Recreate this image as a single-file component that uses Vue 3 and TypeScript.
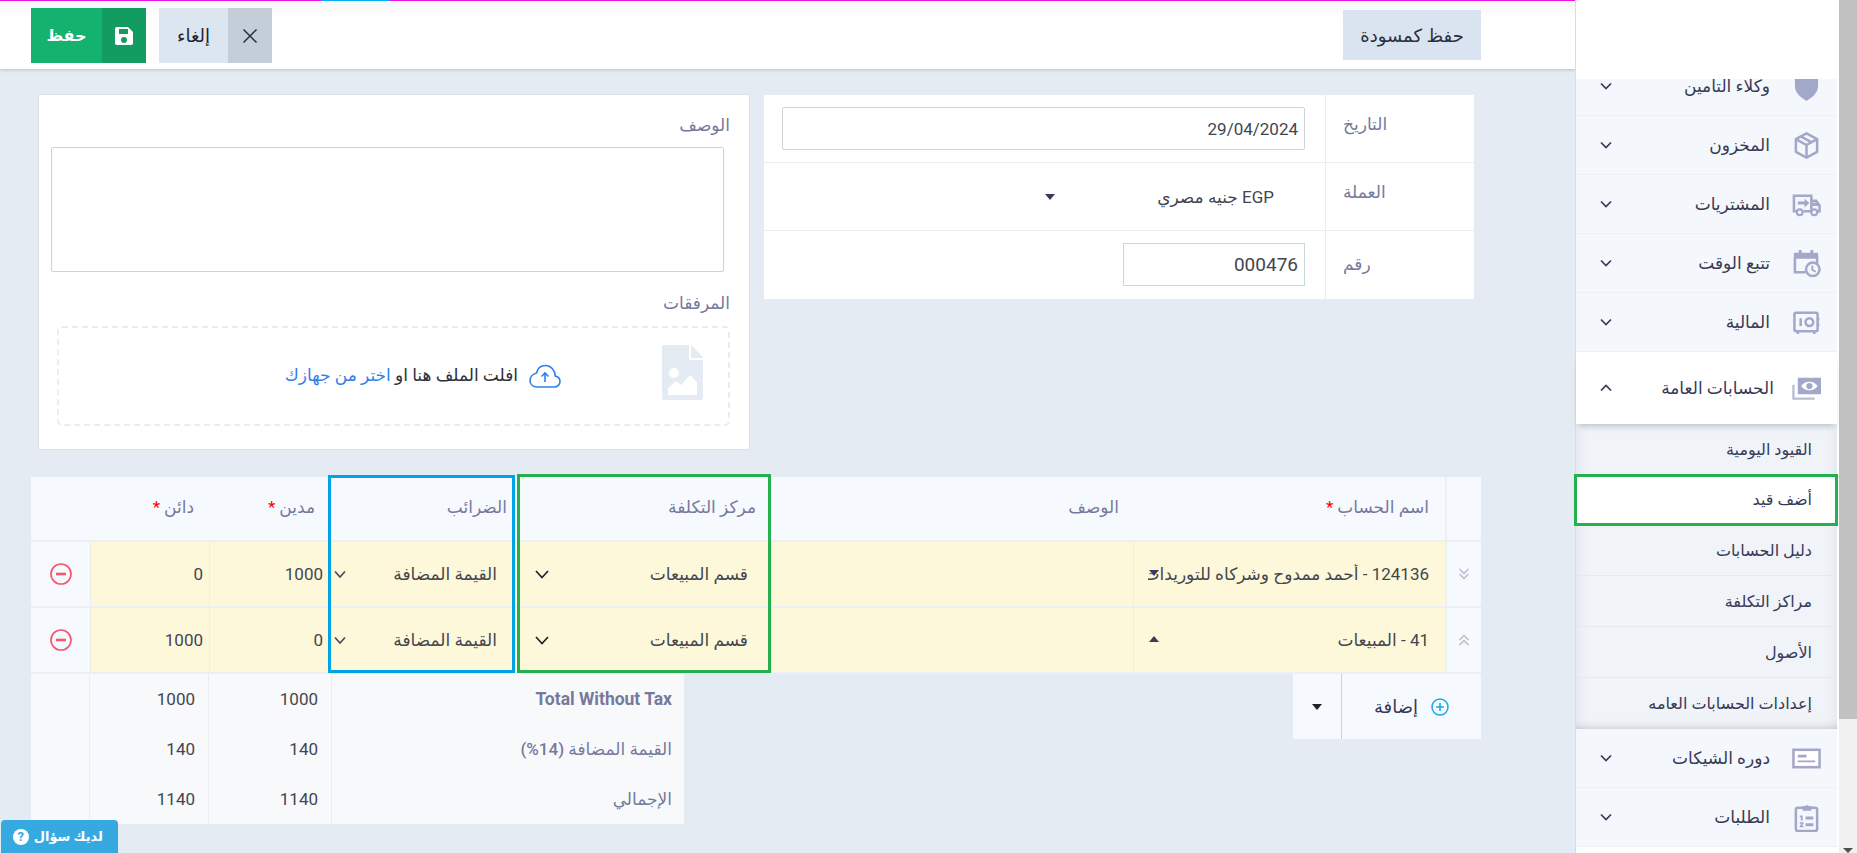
<script setup lang="ts">
interface NavItem { label: string; icon: string }
const before: NavItem[] = [
  { label: 'وكلاء التامين', icon: 'shield' },
  { label: 'المخزون', icon: 'box' },
  { label: 'المشتريات', icon: 'truck' },
  { label: 'تتبع الوقت', icon: 'time' },
  { label: 'المالية', icon: 'safe' },
]
const after: NavItem[] = [
  { label: 'دوره الشيكات', icon: 'cheque' },
  { label: 'الطلبات', icon: 'list' },
]
const subs = ['القيود اليومية', 'أضف قيد', 'دليل الحسابات', 'مراكز التكلفة', 'الأصول', 'إعدادات الحسابات العامه']
const rows = [
  { account: '124136 - أحمد ممدوح وشركاه للتوريدات', up: false, debit: '1000', credit: '0' },
  { account: '41 - المبيعات', up: true, debit: '0', credit: '1000' },
]
const totals = [
  { label: 'Total Without Tax', a: '1000', b: '1000', strong: true },
  { label: 'القيمة المضافة (14%)', a: '140', b: '140', strong: false },
  { label: 'الإجمالي', a: '1140', b: '1140', strong: false },
]
</script>

<template>
  <div class="page" dir="rtl">
    <div class="scrollbar"><div class="thumb"></div><div class="track"><span class="sb-arrow"></span></div></div>

    <aside class="side">
      <div class="logo"></div>
      <ul class="nav">
        <li v-for="(n, i) in before" :key="n.label" class="nav-item" :class="{ cut: i === 0 }">
          <svg class="nav-icon" viewBox="0 0 30 30" aria-hidden="true">
            <path v-if="n.icon === 'shield'" fill="#a3a7c9" d="M3 0h24v14c0 8-6 12-12 16C9 26 3 22 3 14z" />
            <g v-else-if="n.icon === 'box'" fill="none" stroke="#a3a7c9" stroke-width="2.6" stroke-linejoin="round">
              <path d="M15 2.5l11 6v13l-11 6-11-6v-13z" /><path d="M4 8.5l11 6 11-6M15 14.5v13M9 5.5l11 6" />
            </g>
            <g v-else-if="n.icon === 'truck'">
              <path fill="none" stroke="#a3a7c9" stroke-width="2.6" d="M6 22H2V6h18v16H12M20 11h5l3.5 5v6H26" />
              <path fill="#a3a7c9" d="M21 13h4.5l2 3.5H21zM6 12h7V9l5 4.5-5 4.5v-3H6z" />
              <circle cx="8" cy="23" r="3" fill="#f4f7fb" stroke="#a3a7c9" stroke-width="2.2" /><circle cx="23" cy="23" r="3" fill="#f4f7fb" stroke="#a3a7c9" stroke-width="2.2" />
            </g>
            <g v-else-if="n.icon === 'time'">
              <path fill="#a3a7c9" d="M7 1h3v3h9V1h3v3h5v6H2V4h5z" />
              <path fill="none" stroke="#a3a7c9" stroke-width="2.6" d="M3 8v16h11M26 8v7" />
              <circle cx="21.5" cy="21" r="7" fill="#f4f7fb" stroke="#a3a7c9" stroke-width="2.6" />
              <path fill="none" stroke="#a3a7c9" stroke-width="2" d="M21 17v4.5l3.5 2" />
            </g>
            <g v-else fill="none" stroke="#a3a7c9" stroke-width="2.6">
              <rect x="2.5" y="5" width="24" height="19" rx="2" />
              <circle cx="18" cy="14.5" r="4" /><path d="M9 10.5v8M6 24v3M23 24v3M27 10v3M27 16v3" />
            </g>
          </svg>
          <span class="nav-label">{{ n.label }}</span>
          <svg class="chev" viewBox="0 0 12 8" aria-hidden="true"><path d="M1 1.500l5 5 5-5" /></svg>
        </li>
        <li class="nav-item open">
          <svg class="nav-icon" viewBox="0 0 30 30" aria-hidden="true">
            <path fill="#a3a7c9" fill-rule="evenodd" d="M6 4h24v17H6zM9.500 12.500c2-3 5-4.500 8.500-4.500s6.500 1.500 8.500 4.500c-2 3-5 4.500-8.500 4.500s-6.500-1.500-8.500-4.500z" />
            <circle cx="18" cy="12.500" r="3.200" fill="#a3a7c9" />
            <path fill="none" stroke="#b9bdd6" stroke-width="2.400" d="M1.500 11v14.500h22" />
          </svg>
          <span class="nav-label">الحسابات العامة</span>
          <svg class="chev up" viewBox="0 0 12 8" aria-hidden="true"><path d="M1 6.500l5-5 5 5" /></svg>
        </li>
        <li class="subs">
          <div v-for="(s, i) in subs" :key="s" class="sub" :class="{ active: i === 1, plain: i === 0 }">{{ s }}</div>
        </li>
        <li v-for="n in after" :key="n.label" class="nav-item">
          <svg class="nav-icon" viewBox="0 0 30 30" aria-hidden="true">
            <g v-if="n.icon === 'cheque'">
              <rect x="1.500" y="6" width="27" height="18" fill="#fff" stroke="#a3a7c9" stroke-width="2.600" />
              <path fill="#a3a7c9" d="M6 11h9v3H6zM6 17h18v2H6z" />
            </g>
            <g v-else>
              <rect x="4" y="5" width="22" height="24" rx="2" fill="none" stroke="#a3a7c9" stroke-width="2.600" />
              <path fill="#a3a7c9" d="M11 3h3a2 2 0 0 1 3 0h3v5H11zM8 13h3v5H9v-3.500H8zM14 14h8v3h-8zM8 20h4v1.500l-2 2h2V25H8v-1.500l2-2H8zM14 21h8v3h-8z" />
            </g>
          </svg>
          <span class="nav-label">{{ n.label }}</span>
          <svg class="chev" viewBox="0 0 12 8" aria-hidden="true"><path d="M1 1.500l5 5 5-5" /></svg>
        </li>
      </ul>
    </aside>

    <main class="main">
      <header class="topbar">
        <div class="stripe"><i class="magenta grow"></i><i class="cyan"></i><i class="magenta left"></i></div>
        <button class="btn draft">حفظ كمسودة</button>
        <div class="actions">
          <button class="btn cancel"><span class="btn-icon">
            <svg viewBox="0 0 16 16" width="16" height="16"><path d="M1.500 1.500l13 13M14.500 1.500l-13 13" stroke="#2b2f3a" stroke-width="1.500" fill="none" /></svg>
          </span><span class="btn-text">إلغاء</span></button>
          <button class="btn save"><span class="btn-icon">
            <svg viewBox="0 0 20 20" width="20" height="20"><path fill="#fff" fill-rule="evenodd" d="M3 1h11l5 5v11a2 2 0 0 1-2 2H3a2 2 0 0 1-2-2V3a2 2 0 0 1 2-2zm2 2v5h9V3zm5 8a3 3 0 1 0 0 6 3 3 0 0 0 0-6z" /></svg>
          </span><span class="btn-text">حفظ</span></button>
        </div>
      </header>

      <section class="forms">
        <div class="info">
          <div class="info-row">
            <div class="info-label">التاريخ</div>
            <div class="info-value"><div class="input wide">29/04/2024</div></div>
          </div>
          <div class="info-row">
            <div class="info-label">العملة</div>
            <div class="info-value flat"><div class="currency"><span>EGP جنيه مصري</span><i class="caret"></i></div></div>
          </div>
          <div class="info-row">
            <div class="info-label low">رقم</div>
            <div class="info-value"><div class="input short">000476</div></div>
          </div>
        </div>

        <div class="card">
          <label class="field-label first">الوصف</label>
          <div class="textarea"></div>
          <label class="field-label second">المرفقات</label>
          <div class="drop">
            <svg class="file" viewBox="0 0 41 55" aria-hidden="true">
              <path fill="#e4ebf2" fill-rule="evenodd" d="M2 0h25v15h14v38a2 2 0 0 1-2 2H2a2 2 0 0 1-2-2V2a2 2 0 0 1 2-2zm5 28a5 5 0 1 0 10 0 5 5 0 0 0-10 0zm-1 22h29V37l-7-7-9 10-5-4-8 7z" />
              <path fill="#e4ebf2" d="M29 0l12 12v1H29z" />
            </svg>
            <svg class="cloud" viewBox="0 0 32 24" aria-hidden="true">
              <path fill="none" stroke="#2f80ed" stroke-width="1.600" stroke-linejoin="round" d="M8 23h17c3.500 0 6-2.500 6-5.500 0-2.800-2-5-4.700-5.400C26 6 21.500 1.500 16.500 1.500 12 1.500 8.500 4.500 7.500 9 4 10 1 13 1 16.500 1 20.500 4 23 8 23z" />
              <path fill="none" stroke="#2f80ed" stroke-width="1.600" d="M16 18V9M12.500 12.500L16 9l3.500 3.500" />
            </svg>
            <span class="drop-text">افلت الملف هنا او <a>اختر من جهازك</a></span>
          </div>
        </div>
      </section>

      <section class="grid-wrap">
        <div class="tr head">
          <div class="c handle"></div>
          <div class="c account">اسم الحساب <b>*</b></div>
          <div class="c desc">الوصف</div>
          <div class="c cost">مركز التكلفة</div>
          <div class="c tax">الضرائب</div>
          <div class="c debit">مدين <b>*</b></div>
          <div class="c credit">دائن <b>*</b></div>
          <div class="c remove"></div>
        </div>
        <div v-for="r in rows" :key="r.account" class="tr body">
          <div class="c handle">
            <svg viewBox="0 0 12 14" width="12" height="14" aria-hidden="true"><path fill="none" stroke="#b4b9cf" stroke-width="1.400" :d="r.up ? 'M1.500 7L6 2.500 10.500 7M1.500 12L6 7.500 10.500 12' : 'M1.500 2L6 6.500 10.500 2M1.500 7L6 11.500 10.500 7'" /></svg>
          </div>
          <div class="c account y"><span class="clip">{{ r.account }}</span><i class="caret overlay" :class="{ flip: r.up }"></i></div>
          <div class="c desc y"></div>
          <div class="c cost y between"><span>قسم المبيعات</span><svg class="rowchev big" viewBox="0 0 14 9" aria-hidden="true"><path d="M1 1l6 6.500L13 1" /></svg></div>
          <div class="c tax y between"><span>القيمة المضافة</span><svg class="rowchev" viewBox="0 0 14 9" aria-hidden="true"><path d="M2 1.500l5 5.500 5-5.500" /></svg></div>
          <div class="c debit y">{{ r.debit }}</div>
          <div class="c credit y">{{ r.credit }}</div>
          <div class="c remove">
            <svg viewBox="0 0 22 22" width="22" height="22" aria-hidden="true"><circle cx="11" cy="11" r="10" fill="none" stroke="#f7566f" stroke-width="1.700" /><path d="M6 11h10" stroke="#f7566f" stroke-width="2.600" /></svg>
          </div>
        </div>
        <div class="mark blue"></div>
        <div class="mark green"></div>

        <div class="below">
          <div class="add">
            <div class="add-main">
              <svg viewBox="0 0 18 18" width="18" height="18" aria-hidden="true"><circle cx="9" cy="9" r="8" fill="none" stroke="#1aa7ec" stroke-width="1.500" /><path d="M9 5v8M5 9h8" stroke="#1aa7ec" stroke-width="1.600" /></svg>
              <span>إضافة</span>
            </div>
            <div class="add-more"><i class="caret dark"></i></div>
          </div>
          <div class="totals">
            <div v-for="t in totals" :key="t.label" class="total-row">
              <div class="t-label" :class="{ strong: t.strong }">{{ t.label }}</div>
              <div class="t-num a">{{ t.a }}</div>
              <div class="t-num b">{{ t.b }}</div>
              <div class="t-end"></div>
            </div>
          </div>
        </div>
      </section>
    </main>

    <button class="help"><span>لديك سؤال</span><span class="q">?</span></button>
  </div>
</template>

<style>
html, body { margin: 0; overflow: hidden; background: #fff; }
</style>

<style scoped>
* { box-sizing: border-box; }
.page {
  position: relative; display: flex; width: 1857px; height: 853px; overflow: hidden;
  font-family: Roboto, "DejaVu Sans", sans-serif; font-size: 17px; color: #3a3b50; background: #fff;
}
.scrollbar { width: 18px; flex: none; display: flex; flex-direction: column; }
.thumb { height: 719px; background: #c1c1c1; }
.track { flex: 1; background: #f1f1f1; position: relative; }
.sb-arrow { position: absolute; bottom: 0; left: 4px; border: 5px solid transparent; border-top: 5px solid #505050; border-bottom: 0; }

.side { width: 263px; flex: none; padding-right: 2px; background: #fff; position: relative; z-index: 2; box-shadow: -1px 0 0 #d7dde6; }
.logo { height: 79px; background: #fff; position: relative; z-index: 1; }
.nav { list-style: none; margin: 0; padding: 0; background: #f4f7fb; }
.nav-item {
  display: flex; align-items: center; height: 59px; padding: 0 16px 0 0; background: #f4f7fb;
  border-bottom: 1px solid #edf0f5; font-size: 17px; color: #373a57;
}
.nav-item.cut { margin-top: -22px; }
.nav-icon { width: 29px; height: 29px; flex: none; }
.nav-label { margin-right: 22px; flex: 1; }
.chev { width: 12px; height: 8px; margin-left: 24px; fill: none; stroke: #373a57; stroke-width: 1.700; flex: none; }
.nav-item.open { height: 72px; background: #fff; border: 0; position: relative; z-index: 1; box-shadow: 0 5px 6px -3px rgba(60, 70, 100, .3); }
.nav-item.open .nav-label { margin-right: 18px; }
.subs { background: #f0f3f8; box-shadow: inset 0 -10px 10px -10px rgba(60, 70, 100, .3), inset 16px 0 12px -14px rgba(60, 70, 100, .08), inset -16px 0 12px -14px rgba(60, 70, 100, .08); }
.sub { height: 51px; display: flex; align-items: center; padding-right: 25px; border-bottom: 1px solid #e4e8f0; font-size: 16px; color: #373a57; }
.sub.plain { height: 50px; border: 0; }
.sub.active { background: #fff; position: relative; border: 0; }
.sub.active::after { content: ""; position: absolute; top: 0; bottom: -1px; left: -2px; right: -1px; border: 3px solid #22b14c; }
.sub:last-child { border: 0; }

.main { width: 1576px; flex: none; display: flex; flex-direction: column; background: #e4ebf2; }
.topbar {
  position: relative; height: 69px; flex: none; display: flex; justify-content: space-between; align-items: center;
  padding: 1px 95px 0 0; background: linear-gradient(#f7f7f7, #fff 20px); box-shadow: 0 1px 3px rgba(60, 70, 100, .25);
}
.stripe { position: absolute; inset: 0 0 auto 0; height: 1px; display: flex; }
.stripe i { display: block; }
.magenta { background: #ea12e6; }
.grow { flex: 1; }
.cyan { width: 69px; background: #00aeef; }
.left { width: 321px; }
.btn { border: 0; padding: 0; font: inherit; color: inherit; cursor: pointer; display: flex; align-items: stretch; }
.draft { width: 138px; height: 50px; background: #d9e4f0; color: #2b2f3a; align-items: center; justify-content: center; font-size: 18px; }
.actions { display: flex; gap: 13px; padding-left: 31px; }
.save, .cancel { height: 55px; margin-top: 1px; }
.btn-icon { display: flex; align-items: center; justify-content: center; width: 44px; }
.btn-text { display: flex; align-items: center; justify-content: center; flex: 1; }
.save { width: 115px; background: #14b26f; color: #fff; font-size: 16px; font-weight: 700; }
.save .btn-icon { background: #129c62; }
.cancel { width: 113px; background: #dce6f1; color: #22252f; font-size: 18px; }
.cancel .btn-icon { background: #c4ced9; }

.forms { display: flex; align-items: flex-start; gap: 14px; padding: 25px 102px 0 0; }
.info { width: 710px; flex: none; background: #fff; margin-top: 1px; }
.info-row { display: flex; height: 68px; border-bottom: 1px solid #e9edf2; }
.info-row:last-child { border: 0; }
.info-label { width: 149px; flex: none; padding: 19px 0 0 17px; text-align: left; border-left: 1px solid #e9edf2; color: #75799d; font-size: 17px; }
.info-label.low { padding-top: 23px; }
.info-value { flex: 1; padding: 12px 20px 0 0; }
.info-value.flat { padding: 0; }
.input { height: 43px; display: flex; align-items: center; padding: 0 6px; font-size: 17px; color: #43464f; background: #fff; }
.wide { width: 523px; border: 1px solid #cfd3da; border-radius: 2px; }
.short { width: 182px; border: 1px solid #c9d8df; font-size: 19px; }
.currency { width: 280px; height: 68px; padding: 0 51px 0 0; display: flex; align-items: center; justify-content: space-between; color: #43464f; }
.caret { display: block; width: 0; height: 0; border: 5px solid transparent; border-top: 6px solid #3a3b5c; border-bottom: 0; }
.caret.dark { border-top-color: #222; }
.card { width: 712px; height: 356px; flex: none; background: #fff; border: 1px solid #dce1e8; padding: 0 19px 0 12px; }
.field-label { display: block; color: #75799d; font-size: 17px; }
.first { margin-top: 20px; height: 32px; }
.textarea { height: 125px; margin: 0 6px 0 0; border: 1px solid #cdd1d9; border-radius: 2px; }
.second { margin-top: 21px; height: 33px; }
.drop { height: 100px; margin-left: 6px; border: 2px dashed #e9edf3; border-radius: 5px; display: flex; align-items: center; padding-right: 25px; }
.file { width: 41px; height: 55px; flex: none; margin-bottom: 7px; }
.cloud { width: 32px; height: 24px; margin-right: 101px; flex: none; }
.drop-text { margin: 0 11px 2px 0; color: #2b2f3a; font-size: 17px; }
.drop-text a { color: #2f80ed; }

.grid-wrap { position: relative; width: 1450px; margin: 27px 95px 0 0; }
.tr { display: grid; grid-template-columns: 36px 312px 362px 254px 189px 119px 119px 59px; }
.head { height: 65px; background: #f6f9fd; color: #75799d; border-bottom: 2px solid #ecf0f5; }
.body { height: 66px; border-bottom: 2px solid #ecf0f5; background: #f6f9fd; }
.c { display: flex; align-items: center; min-width: 0; position: relative; }
.head .c { padding-right: 12px; padding-bottom: 4px; font-size: 17px; }
.head .c b { color: #f00; font-weight: 400; margin-right: 4px; }
.head .account { padding-right: 16px; }
.head .desc { padding-right: 14px; }
.head .cost { padding-right: 15px; }
.head .tax { padding-right: 10px; }
.head .debit { padding-right: 13px; }
.head .credit { padding-right: 15px; }
.y { background: #fef8da; border-left: 1px solid #ecedeb; padding: 0 6px; color: #43464f; font-size: 17px; }
.handle, .remove { justify-content: center; }
.handle { border-left: 2px solid #ecf0f5; }
.account.y { padding: 0 16px 0 0; }
.clip { display: block; white-space: nowrap; overflow: hidden; width: 281px; }
.overlay { position: absolute; left: 15px; top: 28px; }
.overlay.flip { transform: rotate(180deg); }
.between { justify-content: space-between; }
.cost.y { padding: 0 23px 0 0; border: 0; }
.tax.y { padding: 0 20px 0 0; border: 0; }
.debit.y { padding-right: 5px; }
.rowchev { width: 14px; height: 9px; margin-left: 18px; fill: none; stroke: #1f2230; stroke-width: 1.700; }
.tax .rowchev { margin-left: 5px; stroke: #4a4c5c; }
.mark { position: absolute; pointer-events: none; border: 3px solid; }
.blue { left: 297px; top: -2px; width: 187px; height: 198px; border-color: #00a4e6; }
.green { left: 486px; top: -3px; width: 254px; height: 199px; border-color: #22b14c; }

.below { display: flex; justify-content: space-between; align-items: flex-start; }
.add { width: 188px; height: 65px; display: flex; background: #f6f9fd; }
.add-main { flex: 1; display: flex; align-items: center; gap: 13px; padding-right: 32px; color: #373a57; font-size: 18px; }
.add-more { width: 49px; display: flex; align-items: center; justify-content: center; border-right: 1px solid #ccd2da; }
.totals { width: 653px; background: #f8f9fb; color: #43464f; }
.total-row { display: grid; grid-template-columns: 352px 123px 119px 59px; height: 50px; font-size: 17px; }
.t-label { display: flex; align-items: center; padding-right: 12px; color: #75799d; font-weight: 500; }
.t-label.strong { font-weight: 700; font-size: 17.500px; }
.t-num { display: flex; align-items: center; padding-right: 13px; border-right: 1px solid #ecedf2; }
.t-end { border-right: 1px solid #ecedf2; }

.help {
  position: absolute; left: 1px; bottom: 0; width: 117px; height: 33px; border: 0; border-radius: 4px 4px 0 0;
  background: #36a9e1; color: #fff; font: inherit; font-size: 13px; font-weight: 700; display: flex; align-items: center; gap: 5px; padding: 0 15px 0 0;
}
.q { width: 16px; height: 16px; border-radius: 50%; background: #fff; color: #36a9e1; display: flex; align-items: center; justify-content: center; font-size: 13px; }
</style>
